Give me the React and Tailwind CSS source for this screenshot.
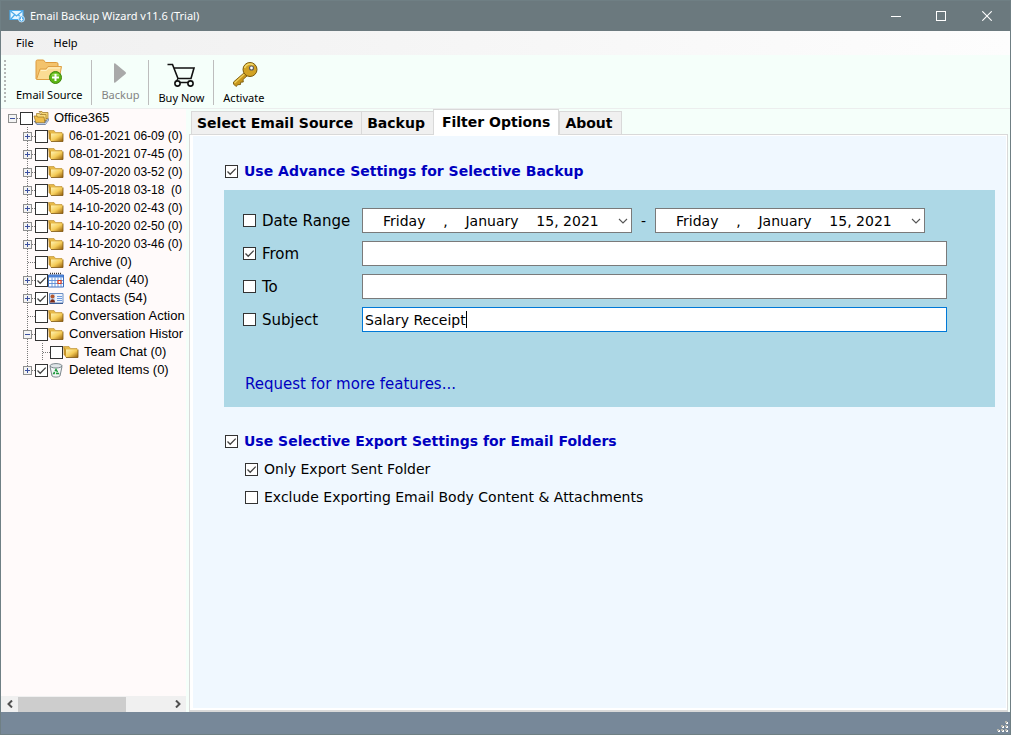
import { useState } from "react";
import clsx from "clsx";

const TREE = [
  { label: "Office365", level: 0, icon: "root", box: "minus" },
  { label: "06-01-2021 06-09 (0)", level: 1, box: "plus", dated: true },
  { label: "08-01-2021 07-45 (0)", level: 1, box: "plus", dated: true },
  { label: "09-07-2020 03-52 (0)", level: 1, box: "plus", dated: true },
  { label: "14-05-2018 03-18  (0", level: 1, box: "plus", dated: true },
  { label: "14-10-2020 02-43 (0)", level: 1, box: "plus", dated: true },
  { label: "14-10-2020 02-50 (0)", level: 1, box: "plus", dated: true },
  { label: "14-10-2020 03-46 (0)", level: 1, box: "plus", dated: true },
  { label: "Archive (0)", level: 1 },
  { label: "Calendar (40)", level: 1, icon: "calendar", box: "plus", checked: true },
  { label: "Contacts (54)", level: 1, icon: "contacts", box: "plus", checked: true },
  { label: "Conversation Action", level: 1 },
  { label: "Conversation Histor", level: 1, box: "minus" },
  { label: "Team Chat (0)", level: 2, last: true },
  { label: "Deleted Items (0)", level: 1, icon: "trash", box: "plus", checked: true, last: true },
];

const TABS = ["Select Email Source", "Backup", "Filter Options", "About"];

const DATE_TEXT =
  "Friday\u00a0\u00a0\u00a0\u00a0,\u00a0\u00a0\u00a0\u00a0January\u00a0\u00a0\u00a0\u00a015, 2021";

function CheckBox({ id, defaultChecked, label }) {
  return (
    <span className="relative block w-[13px] h-[13px] shrink-0">
      <input
        id={id}
        type="checkbox"
        defaultChecked={defaultChecked}
        aria-label={label}
        className="peer block appearance-none w-[13px] h-[13px] border border-[#333333] bg-white"
      />
      <svg
        viewBox="0 0 13 13"
        className="absolute inset-0 w-[13px] h-[13px] pointer-events-none invisible peer-checked:visible"
        aria-hidden
      >
        <path d="M2.5 6.5l2.7 2.8L10.7 3.6" fill="none" stroke="#444" strokeWidth="1.3" />
      </svg>
    </span>
  );
}

/* ---------- tree ---------- */

function FolderIcon() {
  return (
    <svg viewBox="0 0 16 16" className="w-4 h-4 shrink-0" aria-hidden>
      <defs>
        <linearGradient id="folder" x1="0" y1="0" x2="1" y2="1">
          <stop offset="0" stopColor="#fff3b4" />
          <stop offset="0.5" stopColor="#f5cc58" />
          <stop offset="1" stopColor="#925a08" />
        </linearGradient>
      </defs>
      <path d="M0.500 2.500h5.500l1.500 2H14V12H3z" fill="#e6b848" stroke="#b88a2c" strokeWidth="0.6" />
      <path d="M0.500 2.500l2.500 3V13.500L0.700 10.500z" fill="#c8952a" />
      <path d="M3 5.500h12V13.500H3z" fill="url(#folder)" />
      <path d="M3 13.500h12V5.500" fill="none" stroke="#7d5510" strokeWidth="0.8" />
    </svg>
  );
}

function RootIcon() {
  return (
    <svg viewBox="0 0 16 16" className="w-4 h-4 shrink-0" aria-hidden>
      <path d="M1 11l3 3.5h8l3.5-5" fill="#7f96b8" stroke="#4c638c" strokeWidth="0.7" />
      <path d="M6 1.5h3l.5 1H15v6h-2z" fill="#f7d878" stroke="#9b7320" strokeWidth="0.7" />
      <path d="M3.500 3.500h3l.5 1h6v6H4z" fill="#f9dc7e" stroke="#9b7320" strokeWidth="0.7" />
      <path d="M1 6h3l.5 1H11l1 6H3z" fill="#efbd4a" stroke="#9b7320" strokeWidth="0.7" />
      <path d="M3 13h9l3.500-4.500v2L12.500 14.500H4z" fill="#dfe7f4" stroke="#4c638c" strokeWidth="0.5" />
    </svg>
  );
}

function CalendarIcon() {
  return (
    <svg viewBox="0 0 16 16" className="w-4 h-4 shrink-0" aria-hidden>
      <path d="M0.500 3h15v12H0.500z" fill="#fff" stroke="#3f6fc0" />
      <path d="M1 3h14v2.500H1z" fill="#4d84d8" />
      <path d="M1 8.500h14M1 11.500h14M4 5.500V15M7 5.500V15M10 5.500V15M13 5.500V15" stroke="#5c8cd6" strokeWidth="0.9" />
      <path d="M2 1.500h12" stroke="#333" strokeWidth="1.500" strokeDasharray="1 1" />
      <path d="M10 8.500h3v3h-3z" fill="#fff" stroke="#e03c1c" strokeWidth="1.200" />
    </svg>
  );
}

function ContactsIcon() {
  return (
    <svg viewBox="0 0 16 16" className="w-4 h-4 shrink-0" aria-hidden>
      <path d="M1.500 3.500h13.500v9.500H1.500z" fill="#eef4fd" stroke="#6d8fc4" />
      <path d="M2 4h5v8.500H2z" fill="#c9d9f0" />
      <circle cx="4.500" cy="6.500" r="2" fill="#b5562c" />
      <path d="M2 12.500c0-4.500 5-4.500 5 0z" fill="#7c2b18" />
      <path d="M9 6.500h5M9 8.500h5M9 10.500h5" stroke="#6f9be0" />
      <path d="M1.500 13.500H15" stroke="#3c5c94" />
    </svg>
  );
}

function TrashIcon() {
  return (
    <svg viewBox="0 0 16 16" className="w-4 h-4 shrink-0" aria-hidden>
      <path d="M2 4.500l2 9.500c1.500 1.500 6.500 1.500 8 0l2-9.500z" fill="#f4f6f7" stroke="#6e7a80" strokeWidth="0.9" />
      <ellipse cx="8" cy="3.800" rx="6" ry="2.200" fill="#dfe4e7" stroke="#6e7a80" strokeWidth="0.9" />
      <path d="M8 7.500l2.300 4H5.700z" fill="none" stroke="#1f9a3c" strokeWidth="1.400" strokeDasharray="3 1" />
    </svg>
  );
}

const TREE_ICONS = {
  root: RootIcon,
  calendar: CalendarIcon,
  contacts: ContactsIcon,
  trash: TrashIcon,
};

// one 15px column of the tree: the dotted guide plus the optional +/- box
function Guide({ box, last, root, through }) {
  return (
    <svg viewBox="0 0 15 18" className="w-[15px] h-[18px] shrink-0" shapeRendering="crispEdges" aria-hidden>
      {!root && (
        <path
          d={last ? "M7.5 0V9" : "M7.5 0V18"}
          stroke="#7a7a7a"
          strokeDasharray="1 1"
        />
      )}
      {!through && <path d="M8 9.5H15" stroke="#7a7a7a" strokeDasharray="1 1" />}
      {box && (
        <>
          <path d="M3.5 5.500h8v8h-8z" fill="#f4f4f4" stroke="#8f8f8f" />
          <path d={box === "plus" ? "M5 9.500h5M7.500 7v5" : "M5 9.500h5"} stroke="#3c50a0" />
        </>
      )}
    </svg>
  );
}

function TreeRow({ label, level, icon, box, checked, dated, last }) {
  const Icon = TREE_ICONS[icon] || FolderIcon;
  return (
    <li
      className={clsx(
        "flex items-center h-[18px] whitespace-pre",
        level === 0 ? "pl-1" : "pl-[19px]"
      )}
    >
      {level === 2 && <Guide through />}
      <Guide box={box} last={last && level === 1} root={level === 0} />
      <CheckBox label={label} defaultChecked={checked} />
      <Icon />
      <span className={clsx("pl-[5px]", dated ? "text-xs" : "text-[13px]")}>{label}</span>
    </li>
  );
}

function FolderTree() {
  return (
    <aside className="w-[185px] shrink-0 flex flex-col bg-[#fffafa] font-['Liberation_Sans',Arial,sans-serif] text-black">
      <ul className="flex-1 min-h-0 overflow-hidden">
        {TREE.map((item) => (
          <TreeRow key={item.label} {...item} last={item.last} />
        ))}
      </ul>
      <div className="flex items-center h-4 bg-[#f0f0f0] text-[#505050]">
        <button type="button" aria-label="Scroll left" className="w-[17px] flex justify-center">
          <svg viewBox="0 0 8 8" className="w-2 h-2" aria-hidden>
            <path d="M6 0.500L2.500 4 6 7.500" fill="none" stroke="currentColor" strokeWidth="2" />
          </svg>
        </button>
        <div className="flex-1">
          <div className="w-[108px] h-[15px] bg-[#cdcdcd]" />
        </div>
        <button type="button" aria-label="Scroll right" className="w-[17px] flex justify-center">
          <svg viewBox="0 0 8 8" className="w-2 h-2" aria-hidden>
            <path d="M2 0.500L5.500 4 2 7.500" fill="none" stroke="currentColor" strokeWidth="2" />
          </svg>
        </button>
      </div>
    </aside>
  );
}

/* ---------- title bar, menu, toolbar ---------- */

function AppIcon() {
  return (
    <svg viewBox="0 0 16 16" className="w-4 h-4" aria-hidden>
      <path d="M1 2.500h13v9H1z" fill="#e8f6ff" stroke="#4aa9ea" strokeWidth="1.200" />
      <path d="M1.500 3l6 5 6-5M1.500 11.500L5.500 7M13 11L9.500 7" fill="none" stroke="#4aa9ea" strokeWidth="1.200" />
      <circle cx="12.500" cy="11" r="3" fill="#58b0ee" stroke="#d6ecfb" strokeWidth="0.8" />
      <path d="M12.500 9.200v3M11.300 11.300l1.200 1.200 1.200-1.200" fill="none" stroke="#fff" />
    </svg>
  );
}

function TitleBar() {
  return (
    <header className="flex items-center h-[30px] shrink-0 bg-[#6b797e] pl-2 text-white">
      <AppIcon />
      <h1 className="flex-1 pl-[5px] text-[11px] leading-4">Email Backup Wizard v11.6 (Trial)</h1>
      <div className="flex">
        <button type="button" aria-label="Minimize" className="w-[45px] h-[30px] flex items-center justify-center">
          <svg viewBox="0 0 10 10" className="w-[10px] h-[10px]" shapeRendering="crispEdges" aria-hidden>
            <path d="M0 5.500h10" stroke="#fff" />
          </svg>
        </button>
        <button type="button" aria-label="Maximize" className="w-[46px] h-[30px] flex items-center justify-center">
          <svg viewBox="0 0 10 10" className="w-[10px] h-[10px]" shapeRendering="crispEdges" aria-hidden>
            <path d="M0.500 0.500h9v9h-9z" fill="none" stroke="#fff" />
          </svg>
        </button>
        <button type="button" aria-label="Close" className="w-[46px] h-[30px] flex items-center justify-center">
          <svg viewBox="0 0 10 10" className="w-[10px] h-[10px]" aria-hidden>
            <path d="M0.300 0.300l9.400 9.400M9.700 0.300L0.300 9.700" stroke="#fff" strokeWidth="1.100" />
          </svg>
        </button>
      </div>
    </header>
  );
}

function SourceIcon() {
  return (
    <svg viewBox="0 0 28 26" className="w-7 h-[26px]" aria-hidden>
      <path d="M1 20V2.500Q1 1 2.500 1h6l2 2.500h11q1.500 0 1.500 1.500V10" fill="#f3c36c" stroke="#dd9a3c" />
      <path d="M1.500 20.500L5 10h6l2-2.500h13.500L24 20.500z" fill="#fbdc94" stroke="#dfa044" />
      <path d="M6 11.500h5.500l2-2.500H25" fill="none" stroke="#fff0c4" />
      <circle cx="20.500" cy="18.500" r="6" fill="#5cb615" stroke="#3f860b" />
      <path d="M16 16.500a5 4 0 0 1 9 0" fill="#9bdb58" />
      <path d="M20.500 15v7M17 18.500h7" stroke="#fff" strokeWidth="2" />
    </svg>
  );
}

function PlayIcon() {
  return (
    <svg viewBox="0 0 28 26" className="w-7 h-[26px]" aria-hidden>
      <path d="M8 5.200q0-1.500 1.300-.6L19.500 13q1.200 1 0 2L9.300 23.400q-1.300.9-1.300-.6z" fill="#a9a9a9" />
    </svg>
  );
}

function CartIcon() {
  return (
    <svg viewBox="0 0 28 26" className="w-7 h-[26px]" fill="none" stroke="#111" strokeWidth="1.600" aria-hidden>
      <path d="M0.500 2.500H5.500L11 16.500H24L27 6H7" />
      <path d="M11 16.500l-2.500 4H24" strokeWidth="1.300" />
      <circle cx="10.500" cy="21.500" r="2.600" fill="#f5fffa" />
      <circle cx="23.500" cy="21.500" r="2.600" fill="#f5fffa" />
    </svg>
  );
}

function KeyIcon() {
  return (
    <svg viewBox="0 0 28 26" className="w-7 h-[26px]" aria-hidden>
      <path d="M14.500 10.500l3 3-4.500 4 .3 2.500-2.600.2-.2 2.300-2.600.2L6 24.500 3.500 22v-2z" fill="#c8971c" stroke="#7a5a0c" strokeWidth="0.900" />
      <path d="M4.500 21L15.500 11" stroke="#efd05c" strokeWidth="1.200" />
      <circle cx="20" cy="7.500" r="7" fill="#d2a324" stroke="#7a5a0c" />
      <path d="M14.500 6a6 6 0 0 1 9-3" fill="none" stroke="#f2d96a" strokeWidth="1.500" />
      <circle cx="21.500" cy="6" r="2" fill="#fff" stroke="#5f5f60" strokeWidth="1.200" />
    </svg>
  );
}

function ToolButton({ icon: Icon, label, low, disabled }) {
  return (
    <button
      type="button"
      disabled={disabled}
      className={clsx(
        "flex flex-col items-center px-[9px] text-[11px] leading-4 text-black disabled:text-[#838383]",
        low ? "pt-[6px]" : "pt-[3px]"
      )}
    >
      <Icon />
      <span className="pt-[2px]">{label}</span>
    </button>
  );
}

function Separator() {
  return <span className="w-px h-[45px] mt-1 bg-[#bdbdbd]" />;
}

function Toolbar() {
  return (
    <div className="flex h-[54px] shrink-0 bg-[#f5fffa] border-b border-[#eceeee] pl-[2px] pt-[1px]">
      <svg viewBox="0 0 4 44" className="w-1 h-11 mt-1" shapeRendering="crispEdges" aria-hidden>
        <path d="M2 0V44" stroke="#b4b8b6" strokeWidth="2" strokeDasharray="2 2" />
      </svg>
      <ToolButton icon={SourceIcon} label="Email Source" />
      <Separator />
      <ToolButton icon={PlayIcon} label="Backup" disabled />
      <Separator />
      <ToolButton icon={CartIcon} label="Buy Now" low />
      <Separator />
      <ToolButton icon={KeyIcon} label="Activate" low />
    </div>
  );
}

/* ---------- filter options ---------- */

function DateSelect({ label }) {
  return (
    <div className="relative w-[270px]">
      <select
        aria-label={label}
        className="block w-full h-[25px] pl-5 appearance-none rounded-none border border-[#7a7a7a] bg-white text-black"
      >
        <option>{DATE_TEXT}</option>
      </select>
      <svg viewBox="0 0 10 6" className="absolute right-1 top-[10px] w-[10px] h-[6px] pointer-events-none" aria-hidden>
        <path d="M1 1l4 4 4-4" fill="none" stroke="#555" strokeWidth="1.100" />
      </svg>
    </div>
  );
}

function CheckLabel({ id, checked, children, className }) {
  return (
    <label htmlFor={id} className={clsx("flex items-center gap-[6px]", className)}>
      <CheckBox id={id} defaultChecked={checked} />
      {children}
    </label>
  );
}

function TextRow({ id, label, checked, value, focused }) {
  const [text, setText] = useState(value || "");
  return (
    <div className="flex items-center">
      <CheckLabel id={id} checked={checked} className="w-[119px] shrink-0 text-[15px]">
        {label}
      </CheckLabel>
      <div className="relative flex-1">
        <input
          type="text"
          aria-label={label}
          value={text}
          onChange={(e) => setText(e.target.value)}
          className={clsx(
            "block w-full h-[25px] border bg-white px-[2px] text-black outline-none",
            focused ? "border-[#0078d7]" : "border-[#7a7a7a]"
          )}
        />
        {focused && (
          <span className="absolute left-[3px] top-1 h-[17px] border-r border-black pointer-events-none" aria-hidden>
            <span className="invisible">{text}</span>
          </span>
        )}
      </div>
    </div>
  );
}

function FilterOptions() {
  return (
    <div className="pl-[31px] pr-[11px] pt-[26px] text-[14px] leading-[18px]">
      <CheckLabel id="advance" checked className="pl-px font-bold text-[#0000c0]">
        Use Advance Settings for Selective Backup
      </CheckLabel>

      <div className="mt-[10px] bg-[#add8e6] pl-[19px] pr-12 pt-[18px] pb-[14px]">
        <div className="flex items-center">
          <CheckLabel id="range" className="w-[119px] shrink-0 text-[15px]">
            Date Range
          </CheckLabel>
          <DateSelect label="Start date" />
          <span className="w-[23px] text-center">-</span>
          <DateSelect label="End date" />
        </div>
        <div className="flex flex-col gap-2 mt-2">
          <TextRow id="from" label="From" checked />
          <TextRow id="to" label="To" />
          <TextRow id="subject" label="Subject" value="Salary Receipt" focused />
        </div>
        <a href="#features" className="block w-fit ml-[2px] mt-[43px] text-[15px] leading-[18px] text-[#0000c0]">
          Request for more features...
        </a>
      </div>

      <CheckLabel id="selective" checked className="mt-[25px] pl-px font-bold text-[#0000c0]">
        Use Selective Export Settings for Email Folders
      </CheckLabel>
      <CheckLabel id="sent" checked className="mt-[10px] ml-[21px]">
        Only Export Sent Folder
      </CheckLabel>
      <CheckLabel id="exclude" className="mt-[10px] ml-[21px]">
        Exclude Exporting Email Body Content &amp; Attachments
      </CheckLabel>
    </div>
  );
}

function TabArea() {
  return (
    <main className="flex-1 min-w-0 flex flex-col pl-[3px] pr-[2px] font-['DejaVu_Sans',Verdana,sans-serif] text-black">
      <div role="tablist" className="flex items-end pl-[2px] text-[14px] leading-[18px] font-bold">
        {TABS.map((tab) => {
          const active = tab === "Filter Options";
          return (
            <button
              key={tab}
              type="button"
              role="tab"
              aria-selected={active}
              className={clsx(
                "border border-b-0 border-[#d9d9d9] whitespace-nowrap",
                active
                  ? "relative -mb-px h-[26px] bg-white px-2 pb-[2px]"
                  : "h-[23px] bg-[#f0f0f0] pl-[5px] pr-2 -mr-px"
              )}
            >
              {tab}
            </button>
          );
        })}
      </div>
      <section className="flex-1 border border-[#d9d9d9] border-b-2 bg-white pt-px pr-px pb-[2px] pl-[3px]">
        <div className="h-full bg-[#f0f8ff]">
          <FilterOptions />
        </div>
      </section>
    </main>
  );
}

export default function App() {
  return (
    <div className="h-screen flex flex-col overflow-hidden border border-[#6f7f84] bg-[#f5fffa] font-['Noto_Sans','Open_Sans',sans-serif]">
      <TitleBar />
      <nav className="flex h-6 shrink-0 items-center bg-linear-to-r from-[#f0f0f0] to-[#fdfdfd] text-[11px] text-black">
        <button type="button" className="pl-[15px] pr-[10px]">File</button>
        <button type="button" className="px-[10px]">Help</button>
      </nav>
      <Toolbar />
      <div className="flex flex-1 min-h-0">
        <FolderTree />
        <TabArea />
      </div>
      <footer className="flex items-end justify-end h-[22px] shrink-0 bg-[#778899] p-px">
        <svg viewBox="0 0 12 12" className="w-3 h-3" shapeRendering="crispEdges" aria-hidden>
          <path d="M9 1h2v2H9zM5 5h2v2H5zM9 5h2v2H9zM1 9h2v2H1zM5 9h2v2H5zM9 9h2v2H9z" fill="#fff" />
          <path d="M8 0h2v2H8zM4 4h2v2H4zM8 4h2v2H8zM0 8h2v2H0zM4 8h2v2H4zM8 8h2v2H8z" fill="#b5b5ad" />
        </svg>
      </footer>
    </div>
  );
}
